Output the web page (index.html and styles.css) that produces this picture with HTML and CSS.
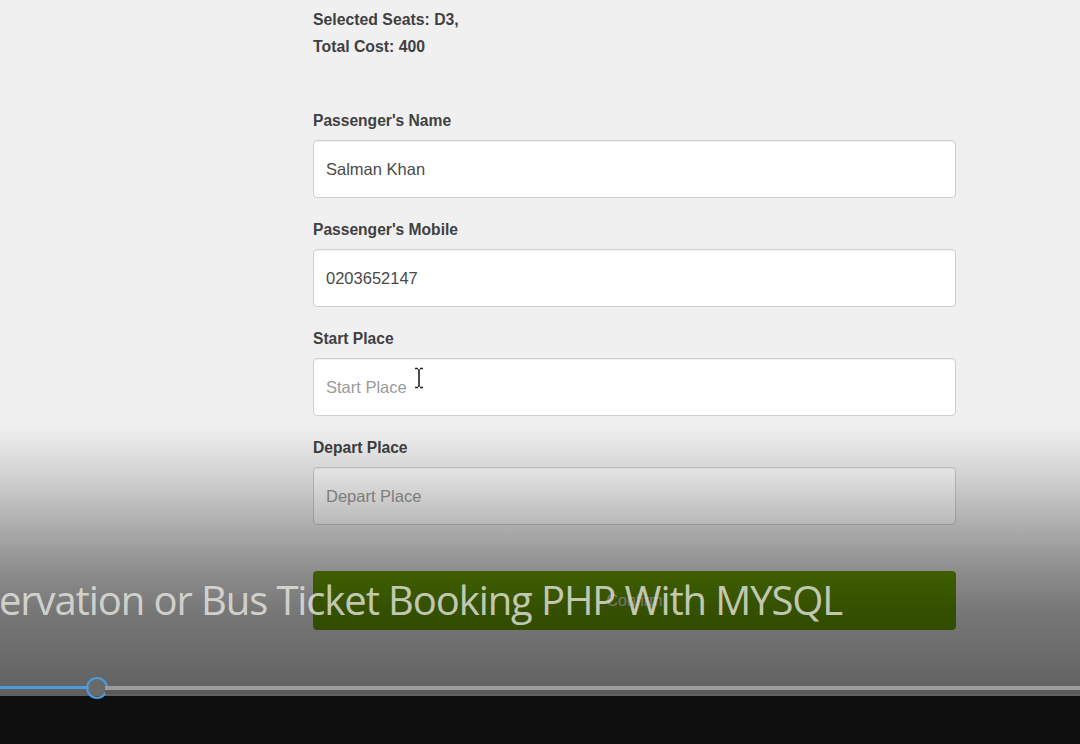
FILE: index.html
```html
<!DOCTYPE html>
<html>
<head>
<meta charset="utf-8">
<link rel="stylesheet" href="styles.css">
</head>
<body>
<div class="player">
  <div class="page">
    <div class="summary">
      <div class="line">Bus Details: BUS101</div>
      <div class="line">Selected Seats: D3,</div>
      <div class="line">Total Cost: 400</div>
    </div>
    <form class="form">
      <div class="field">
        <label class="label">Passenger's Name</label>
        <input class="input" type="text" value="Salman Khan">
      </div>
      <div class="field">
        <label class="label">Passenger's Mobile</label>
        <input class="input" type="text" value="0203652147">
      </div>
      <div class="field">
        <label class="label">Start Place</label>
        <input class="input" type="text" placeholder="Start Place">
      </div>
      <div class="field">
        <label class="label">Depart Place</label>
        <input class="input" type="text" placeholder="Depart Place">
      </div>
      <button class="btn" type="button">Confirm</button>
    </form>
  </div>

  <svg class="cursor" width="10" height="22" viewBox="0 0 10 22">
    <path d="M1 1.5h3M6 1.5h3M5 2v18M1 20.5h3M6 20.5h3" stroke="#222" stroke-width="1.6" fill="none"/>
  </svg>

  <div class="shade"></div>
  <div class="subtitle">ervation or Bus Ticket Booking PHP With MYSQL</div>

  <div class="controls">
    <div class="progress">
      <div class="played"></div>
      <div class="knob"></div>
      <div class="track"></div>
    </div>
    <div class="bar"></div>
  </div>
</div>
</body>
</html>
```

FILE: styles.css
```css
html, body {
  margin: 0;
  padding: 0;
}
body {
  background: #000;
  font-family: "Liberation Sans", Arial, sans-serif;
}
.player {
  position: relative;
  width: 1080px;
  height: 744px;
  overflow: hidden;
  background: #f0f0f0;
}
.page {
  padding-left: 313px;
  width: 643px;
}
.summary {
  margin-top: -21px;
  color: #404040;
  font-weight: bold;
  font-size: 15.8px;
}
.line {
  line-height: 27px;
}
.form {
  margin-top: 50px;
  display: flex;
  flex-direction: column;
  gap: 21px;
}
.field {
  display: flex;
  flex-direction: column;
  gap: 8px;
}
.label {
  font-size: 15.6px;
  font-weight: bold;
  color: #404040;
  line-height: 22px;
}
.input {
  box-sizing: border-box;
  width: 643px;
  height: 58px;
  border: 1px solid #cfcfcf;
  border-radius: 4px;
  box-shadow: inset 0 1px 1px rgba(0,0,0,0.06);
  background: #fff;
  padding: 0 12px;
  font-family: "Liberation Sans", Arial, sans-serif;
  font-size: 16.5px;
  color: #4a4a4a;
  outline: none;
}
.input::placeholder {
  color: #9a9a9a;
}
.btn {
  margin-top: 25px;
  width: 643px;
  height: 59px;
  border: none;
  border-radius: 4px;
  background: #6aa000;
  color: #e6e6de;
  font-family: "Liberation Sans", Arial, sans-serif;
  font-size: 16px;
}
.cursor {
  position: absolute;
  left: 414px;
  top: 367px;
}
.shade {
  position: absolute;
  left: 0;
  right: 0;
  top: 425px;
  height: 271px;
  background: linear-gradient(to bottom,
    rgba(0,0,0,0) 0%,
    rgba(0,0,0,0.12) 18%,
    rgba(0,0,0,0.27) 36%,
    rgba(0,0,0,0.42) 55%,
    rgba(0,0,0,0.5) 68%,
    rgba(0,0,0,0.6) 100%);
}
.subtitle {
  position: absolute;
  left: -1px;
  top: 580px;
  white-space: nowrap;
  font-family: "Open Sans", "Noto Sans", sans-serif;
  font-weight: 400;
  font-size: 40px;
  line-height: 40px;
  letter-spacing: -1.1px;
  color: rgba(232,232,226,0.8);
}
.controls {
  position: absolute;
  left: 0;
  right: 0;
  top: 678px;
  height: 66px;
  display: flex;
  flex-direction: column;
}
.progress {
  position: relative;
  height: 18px;
}
.played {
  position: absolute;
  left: 0;
  top: 8px;
  width: 90px;
  height: 3px;
  background: #4a9be0;
}
.track {
  position: absolute;
  left: 105px;
  right: 0;
  top: 8px;
  height: 4px;
  background: #9c9c9c;
  border-bottom: 4px solid #5a5a5a;
}
.knob {
  position: absolute;
  left: 86px;
  top: -1px;
  width: 18px;
  height: 18px;
  border: 2.5px solid #4a9be0;
  border-radius: 50%;
  background: rgba(110,110,110,0.6);
}
.bar {
  flex: 1;
  background: #0f0f0f;
}
```
